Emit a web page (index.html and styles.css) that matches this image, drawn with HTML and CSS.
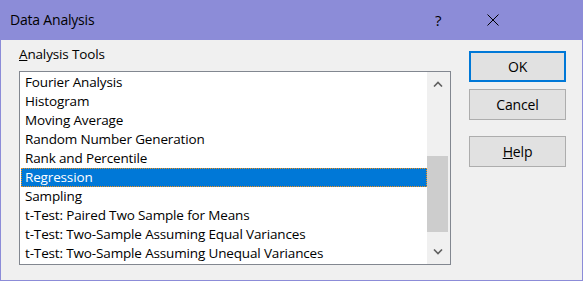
FILE: index.html
```html
<!DOCTYPE html>
<html lang="en">
<head>
    <meta charset="UTF-8">
    <title>Data Analysis</title>
    <link rel="stylesheet" href="styles.css">
</head>
<body>
    <div class="window">
        <div class="titlebar">
            <span class="title">Data Analysis</span>
            <span class="help-btn">?</span>
            <span class="close-btn">
                <svg width="12" height="12" viewBox="0 0 12 12"><path d="M0.5 0.5L11.5 11.5M11.5 0.5L0.5 11.5" stroke="#000" stroke-width="1"/></svg>
            </span>
        </div>
        <div class="content">
            <div class="tools">
                <div class="label"><u>A</u>nalysis Tools</div>
                <div class="listbox">
                    <ul class="items">
                        <li>Fourier Analysis</li>
                        <li>Histogram</li>
                        <li>Moving Average</li>
                        <li>Random Number Generation</li>
                        <li>Rank and Percentile</li>
                        <li class="selected">Regression</li>
                        <li>Sampling</li>
                        <li>t-Test: Paired Two Sample for Means</li>
                        <li>t-Test: Two-Sample Assuming Equal Variances</li>
                        <li>t-Test: Two-Sample Assuming Unequal Variances</li>
                    </ul>
                    <div class="scrollbar">
                        <div class="arrow">
                            <svg width="10" height="6" viewBox="0 0 10 6"><path d="M1 5.5L5 1.5L9 5.5" fill="none" stroke="#606060" stroke-width="1.6"/></svg>
                        </div>
                        <div class="track"><div class="thumb"></div></div>
                        <div class="arrow">
                            <svg width="10" height="6" viewBox="0 0 10 6"><path d="M1 0.5L5 4.5L9 0.5" fill="none" stroke="#606060" stroke-width="1.6"/></svg>
                        </div>
                    </div>
                </div>
            </div>
            <div class="buttons">
                <button class="btn default">OK</button>
                <button class="btn">Cancel</button>
                <button class="btn help"><u>H</u>elp</button>
            </div>
        </div>
    </div>
</body>
</html>
```
FILE: styles.css
```css
body {
    margin: 0;
    padding: 0;
    font-family: 'Open Sans', 'Noto Sans', sans-serif;
    font-size: 13.5px;
    letter-spacing: -0.15px;
    color: #000;
}

.window {
    width: 583px;
    height: 281px;
    display: flex;
    flex-direction: column;
    background-color: #8c8cd8;
}

.titlebar {
    height: 40px;
    display: flex;
    align-items: center;
    padding-left: 10px;
}

.title {
    font-size: 14px;
    letter-spacing: -0.2px;
    flex: 1;
    margin-top: -1px;
}

.help-btn {
    font-size: 15px;
    width: 52px;
    margin-top: -1px;
}

.close-btn {
    width: 96px;
    display: flex;
    align-items: center;
}

.close-btn svg {
    display: block;
}

.content {
    flex: 1;
    margin: 0 1px 1px;
    background-color: #f0f0f0;
    display: flex;
    padding: 4px 17px 0 18px;
    gap: 18px;
}

.label {
    height: 20px;
    line-height: 20px;
    margin-bottom: 7px;
}

.listbox {
    width: 432px;
    height: 194px;
    box-sizing: border-box;
    border: 1px solid #828790;
    background-color: #fff;
    display: flex;
}

.items {
    list-style: none;
    margin: 0;
    padding: 1px 0 0 1px;
    flex: 1;
}

.items li {
    height: 19px;
    line-height: 19px;
    padding-left: 4px;
    white-space: nowrap;
}

.items li.selected {
    background-color: #0078d7;
    color: #fff;
    outline: 1px dotted #f0901a;
    outline-offset: -1px;
}

.scrollbar {
    width: 23px;
    background-color: #f0f0f0;
    display: flex;
    flex-direction: column;
}

.arrow {
    height: 24px;
    flex-shrink: 0;
    display: flex;
    align-items: center;
    justify-content: center;
    padding-right: 2px;
}

.arrow svg {
    display: block;
}

.track {
    flex: 1;
    padding-top: 60px;
}

.thumb {
    width: 21px;
    height: 76px;
    background-color: #cdcdcd;
}

.buttons {
    display: flex;
    flex-direction: column;
    margin-top: 7px;
}

.btn {
    width: 97px;
    height: 31px;
    font-family: inherit;
    font-size: 14px;
    letter-spacing: -0.15px;
    color: #000;
    background-color: #e1e1e1;
    border: 1px solid #adadad;
    margin: 0 0 16px;
    padding: 0;
}

.btn.default {
    border: 2px solid #0078d7;
    margin-bottom: 7px;
}
```
